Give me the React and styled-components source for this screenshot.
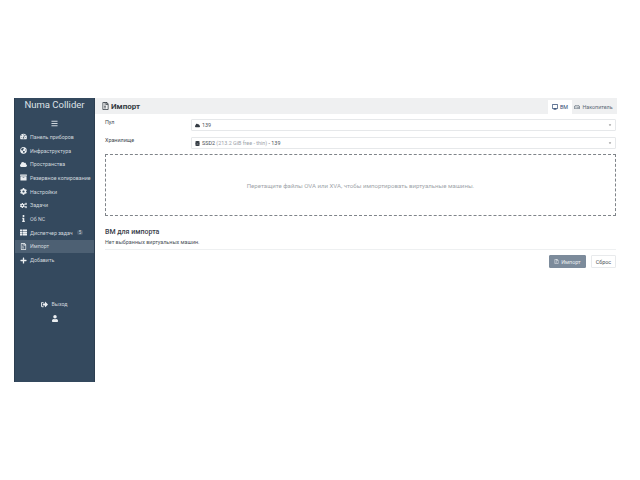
import React from "react";
import styled, { createGlobalStyle } from "styled-components";
import {
  FaArchive,
  FaBars,
  FaCaretDown,
  FaCloud,
  FaCog,
  FaCogs,
  FaDatabase,
  FaDesktop,
  FaGlobeAmericas,
  FaInfo,
  FaPlus,
  FaRegFileArchive,
  FaRegHdd,
  FaSignOutAlt,
  FaTachometerAlt,
  FaThList,
  FaUser,
} from "react-icons/fa";

const GlobalStyle = createGlobalStyle`
  html, body {
    margin: 0;
    padding: 0;
    background: #fff;
    font-family: Roboto, "Liberation Sans", sans-serif;
  }
`;

const Page = styled.div`
  width: 640px;
  height: 480px;
  box-sizing: border-box;
  padding: 98px 23px 98px 14px;
  display: flex;
  overflow: hidden;
`;

const Sidebar = styled.aside`
  width: 81px;
  box-sizing: border-box;
  flex: none;
  background: #34495e;
  border-left: 1px solid #2c3e50;
  border-right: 1px solid #2c3e50;
  color: #cfd6dd;
  display: flex;
  flex-direction: column;
  align-items: stretch;
`;

const Brand = styled.div`
  font-size: 9.5px;
  line-height: 12px;
  padding-top: 1px;
  text-align: center;
  color: #dde2e7;
  margin-bottom: 6px;
`;

const Burger = styled.div`
  display: flex;
  justify-content: center;
  font-size: 7px;
  height: 13px;
  align-items: center;
`;

const NavList = styled.nav`
  display: flex;
  flex-direction: column;
`;

const NavItem = styled.div`
  height: 13.7px;
  display: flex;
  align-items: center;
  gap: 3px;
  padding-left: 5px;
  font-size: 5.3px;
  white-space: nowrap;
  background: ${(p) => (p.$active ? "#4d6073" : "transparent")};

  svg {
    width: 7px;
    height: 7px;
    flex: none;
    color: #eceff2;
  }
`;

const Badge = styled.span`
  font-size: 4.5px;
  padding: 0 2px;
  margin-left: 1px;
  border-radius: 2px;
  background: #4d6073;
`;

const SideFooter = styled.div`
  margin-top: 34px;
  display: flex;
  flex-direction: column;
  align-items: center;
  gap: 7px;
  font-size: 5.3px;
`;

const Logout = styled.div`
  display: flex;
  align-items: center;
  gap: 3px;

  svg {
    width: 7px;
    height: 7px;
    color: #eceff2;
  }
`;

const UserIcon = styled(FaUser)`
  width: 6px;
  height: 7px;
  color: #eceff2;
`;

const Main = styled.main`
  flex: 1;
  min-width: 0;
  display: flex;
  flex-direction: column;
`;

const Header = styled.header`
  height: 16px;
  background: #eff0f1;
  display: flex;
  align-items: flex-end;
  justify-content: space-between;
  padding-right: 2px;
`;

const Title = styled.h1`
  margin: 0;
  align-self: center;
  padding-left: 7px;
  display: flex;
  align-items: center;
  gap: 2px;
  font-size: 8px;
  font-weight: 700;
  color: #333a42;

  svg {
    width: 7px;
    height: 8px;
  }
`;

const Tabs = styled.div`
  display: flex;
`;

const Tab = styled.div`
  height: 14px;
  display: flex;
  align-items: center;
  justify-content: center;
  gap: 2px;
  box-sizing: border-box;
  width: ${(p) => p.$width}px;
  font-size: 5.4px;
  background: ${(p) => (p.$active ? "#fff" : "transparent")};
  color: ${(p) => (p.$active ? "#2f4a73" : "#5d6b78")};

  svg {
    width: 6px;
    height: 6px;
  }
`;

const Content = styled.section`
  padding: 5px 1px 0 10px;
  display: flex;
  flex-direction: column;
`;

const FormRow = styled.div`
  display: grid;
  grid-template-columns: 86px 1fr;
  margin-bottom: 6px;
`;

const Label = styled.label`
  font-size: 5.4px;
  line-height: 7px;
  color: #40474e;
`;

const Select = styled.div`
  height: 12px;
  box-sizing: border-box;
  border: 1px solid #e6e8ea;
  border-radius: 1px;
  display: flex;
  align-items: center;
  gap: 2px;
  padding: 0 3px;
  font-size: 5.4px;
  color: #4a5158;
  background: #fff;

  svg {
    width: 5px;
    height: 5px;
    color: #333a42;
    flex: none;
  }
`;

const Muted = styled.span`
  color: #9aa1a8;
`;

const Caret = styled(FaCaretDown)`
  margin-left: auto;
  color: #777 !important;
  width: 4px !important;
  height: 4px !important;
`;

const DropZone = styled.div`
  height: 62px;
  box-sizing: border-box;
  margin-top: -1px;
  border: 1px dashed #7f8489;
  display: flex;
  align-items: center;
  justify-content: center;
  font-size: 6.1px;
  color: #a0a5aa;
`;

const SectionTitle = styled.h2`
  margin: 11px 0 0;
  font-size: 7px;
  line-height: 10px;
  font-weight: 500;
  color: #39404a;
`;

const EmptyText = styled.p`
  margin: 1px 0 0;
  font-size: 5.4px;
  line-height: 8px;
  color: #4a5158;
`;

const Divider = styled.hr`
  margin: 3px 0 5px;
  border: none;
  border-top: 1px solid #eef0f1;
`;

const Actions = styled.div`
  display: flex;
  justify-content: flex-end;
  gap: 5px;
`;

const Button = styled.button`
  height: 13px;
  width: ${(p) => p.$width}px;
  padding: 0;
  border-radius: 1px;
  border: 1px solid ${(p) => (p.$primary ? "#7c8b9b" : "#e8eaec")};
  background: ${(p) => (p.$primary ? "#7c8b9b" : "#fff")};
  color: ${(p) => (p.$primary ? "#e9ecef" : "#4a5158")};
  font-family: inherit;
  font-size: 5.4px;
  display: flex;
  align-items: center;
  justify-content: center;
  gap: 2px;

  svg {
    width: 5px;
    height: 5px;
  }
`;

const navItems = [
  { icon: FaTachometerAlt, label: "Панель приборов" },
  { icon: FaGlobeAmericas, label: "Инфраструктура" },
  { icon: FaCloud, label: "Пространства" },
  { icon: FaArchive, label: "Резервное копирование" },
  { icon: FaCog, label: "Настройки" },
  { icon: FaCogs, label: "Задачи" },
  { icon: FaInfo, label: "Об NC" },
  { icon: FaThList, label: "Диспетчер задач", badge: "5" },
  { icon: FaRegFileArchive, label: "Импорт", active: true },
  { icon: FaPlus, label: "Добавить" },
];

const App = () => {
  return (
    <Page>
      <GlobalStyle />
      <Sidebar>
        <Brand>Numa Collider</Brand>
        <Burger>
          <FaBars />
        </Burger>
        <NavList>
          {navItems.map((item) => (
            <NavItem key={item.label} $active={item.active}>
              <item.icon />
              <span>{item.label}</span>
              {item.badge && <Badge>{item.badge}</Badge>}
            </NavItem>
          ))}
        </NavList>
        <SideFooter>
          <Logout>
            <FaSignOutAlt />
            <span>Выход</span>
          </Logout>
          <UserIcon />
        </SideFooter>
      </Sidebar>
      <Main>
        <Header>
          <Title>
            <FaRegFileArchive />
            Импорт
          </Title>
          <Tabs>
            <Tab $active $width={24}>
              <FaDesktop />
              ВМ
            </Tab>
            <Tab $width={43}>
              <FaRegHdd />
              Накопитель
            </Tab>
          </Tabs>
        </Header>
        <Content>
          <FormRow>
            <Label>Пул</Label>
            <Select>
              <FaCloud />
              139
              <Caret />
            </Select>
          </FormRow>
          <FormRow>
            <Label>Хранилище</Label>
            <Select>
              <FaDatabase />
              <span>
                SSD2 <Muted>(213.2 GiB free - thin)</Muted> - 139
              </span>
              <Caret />
            </Select>
          </FormRow>
          <DropZone>
            Перетащите файлы OVA или XVA, чтобы импортировать виртуальные машины.
          </DropZone>
          <SectionTitle>ВМ для импорта</SectionTitle>
          <EmptyText>Нет выбранных виртуальных машин.</EmptyText>
          <Divider />
          <Actions>
            <Button $primary $width={37}>
              <FaRegFileArchive />
              Импорт
            </Button>
            <Button $width={25}>Сброс</Button>
          </Actions>
        </Content>
      </Main>
    </Page>
  );
};

export default App;
